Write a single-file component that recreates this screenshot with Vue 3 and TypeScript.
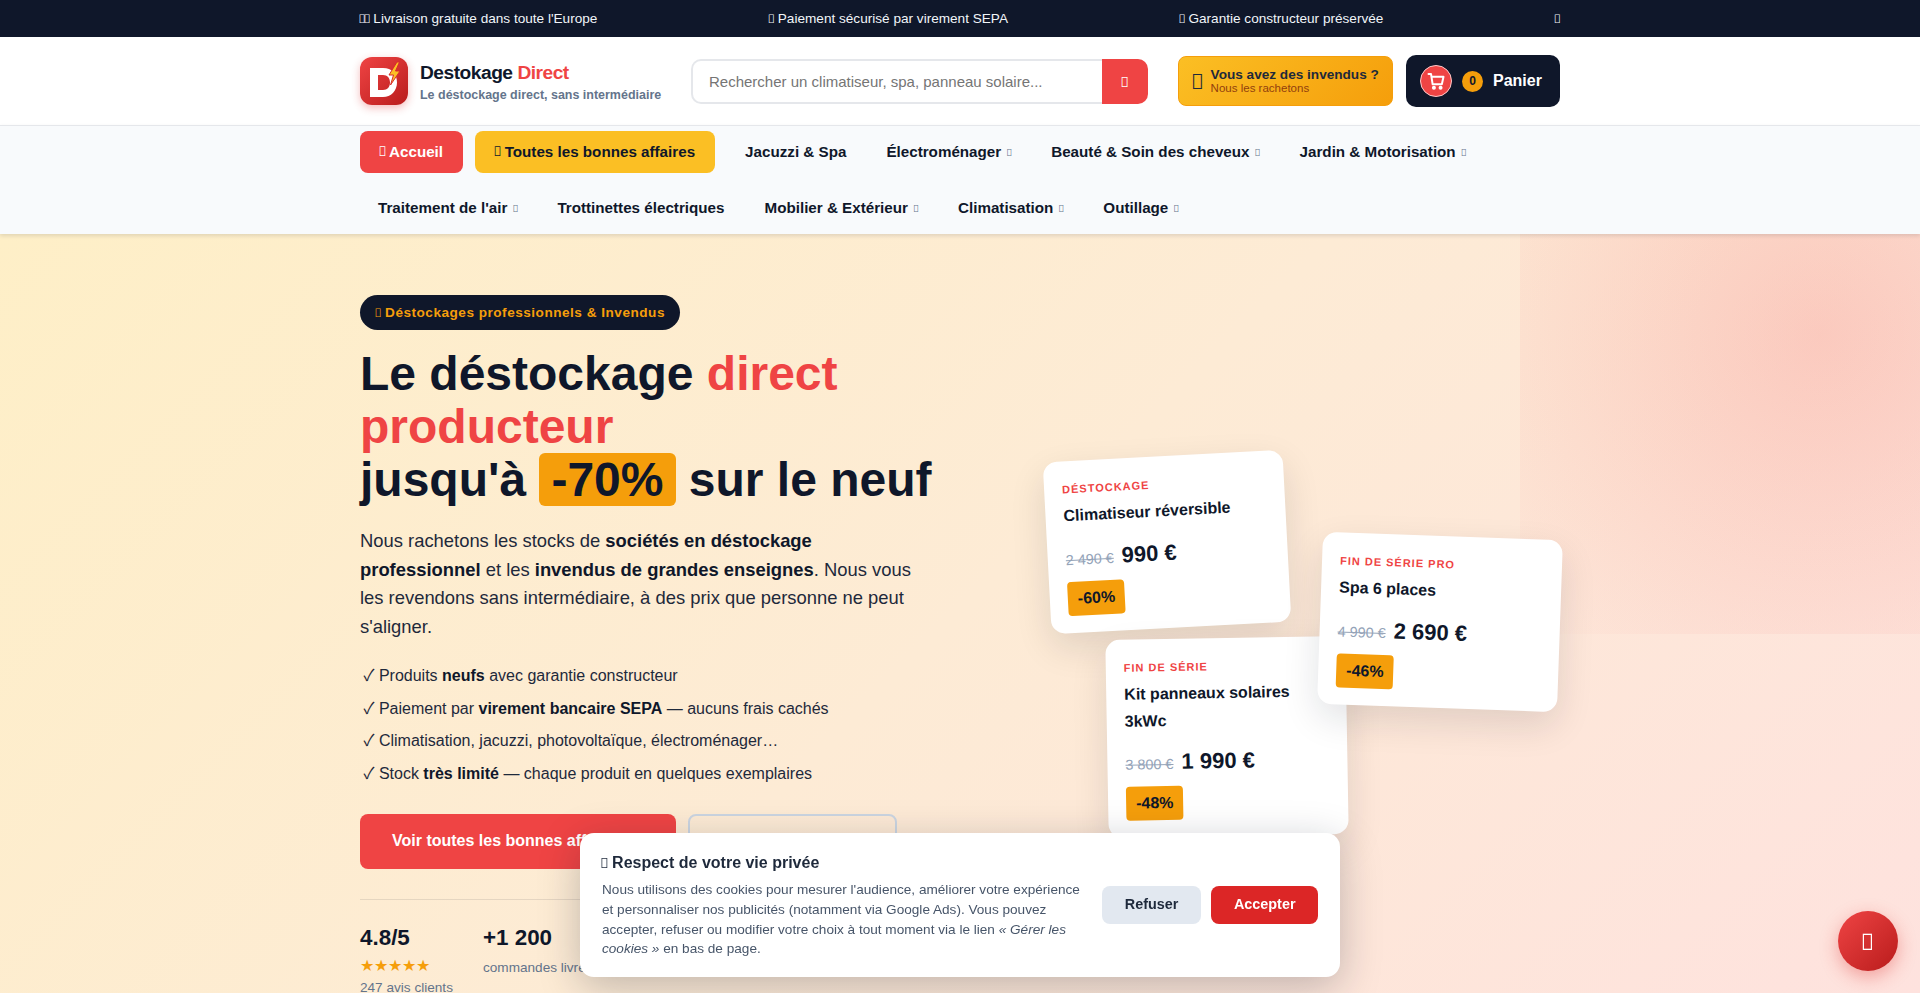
<script setup lang="ts">
interface NavItem {
  label: string
  caret?: boolean
}

interface DealCard {
  tag: string
  name: string
  oldPrice: string
  price: string
  off: string
  cls: string
}

const navItems: NavItem[] = [
  { label: 'Jacuzzi & Spa' },
  { label: 'Électroménager', caret: true },
  { label: 'Beauté & Soin des cheveux', caret: true },
  { label: 'Jardin & Motorisation', caret: true },
  { label: "Traitement de l'air", caret: true },
  { label: 'Trottinettes électriques' },
  { label: 'Mobilier & Extérieur', caret: true },
  { label: 'Climatisation', caret: true },
  { label: 'Outillage', caret: true },
]

const cards: DealCard[] = [
  { tag: 'Déstockage', name: 'Climatiseur réversible', oldPrice: '2 490 €', price: '990 €', off: '-60%', cls: 'deal-a' },
  { tag: 'Fin de série', name: 'Kit panneaux solaires 3kWc', oldPrice: '3 800 €', price: '1 990 €', off: '-48%', cls: 'deal-b' },
  { tag: 'Fin de série pro', name: 'Spa 6 places', oldPrice: '4 990 €', price: '2 690 €', off: '-46%', cls: 'deal-c' },
]

const checks = [
  ['Produits ', 'neufs', ' avec garantie constructeur'],
  ['Paiement par ', 'virement bancaire SEPA', ' — aucuns frais cachés'],
  ['Climatisation, jacuzzi, photovoltaïque, électroménager…', '', ''],
  ['Stock ', 'très limité', ' — chaque produit en quelques exemplaires'],
]
</script>

<template>
  <div class="page">
    <div class="topbar">
      <div class="wrap topbar-row">
        <span><i class="tofu">&#xf024;</i><i class="tofu">&#xf024;</i> Livraison gratuite dans toute l'Europe</span>
        <span><i class="tofu">&#xf023;</i> Paiement sécurisé par virement SEPA</span>
        <span><i class="tofu">&#xf3ed;</i> Garantie constructeur préservée</span>
        <span><i class="tofu">&#xf00d;</i></span>
      </div>
    </div>

    <header class="head">
      <div class="wrap head-row">
        <a class="logo">
          <span class="logo-mark">
            <svg viewBox="0 0 48 48" width="48" height="48">
              <path d="M10 11H23C32 11 37 17 37 25.500C37 34 31 40 23 40H10ZM18 18V33H23C27.500 33 30 30 30 25.500C30 21 27.500 18 23 18Z" fill="#fff" fill-rule="evenodd" />
              <path d="M37 5L29 18H33.500L30.500 28L40 14H35.500L39.500 5Z" fill="#fbbf24" stroke="#d92b2b" stroke-width="1" />
            </svg>
          </span>
          <span class="logo-text">
            <span class="logo-name">Destokage <em>Direct</em></span>
            <span class="logo-sub">Le déstockage direct, sans intermédiaire</span>
          </span>
        </a>

        <form class="search" @submit.prevent>
          <input type="text" placeholder="Rechercher un climatiseur, spa, panneau solaire..." />
          <button type="button"><i class="tofu">&#xf002;</i></button>
        </form>

        <a class="sell">
          <i class="tofu sell-icon">&#xf4c0;</i>
          <span class="sell-text">
            <strong>Vous avez des invendus ?</strong>
            <small>Nous les rachetons</small>
          </span>
        </a>

        <a class="cart">
          <span class="cart-icon">
            <svg viewBox="0 0 24 24" width="20" height="20" fill="none" stroke="#fff" stroke-width="2.400" stroke-linecap="round" stroke-linejoin="round">
              <circle cx="9.500" cy="20" r="1.200" fill="#fff" />
              <circle cx="17.500" cy="20" r="1.200" fill="#fff" />
              <path d="M3 3.500h3l2 12.500h11l2-9H6.600" />
            </svg>
          </span>
          <span class="cart-count">0</span>
          <span class="cart-label">Panier</span>
        </a>
      </div>
    </header>

    <nav class="nav">
      <div class="wrap nav-row">
        <a class="nav-link is-home"><i class="tofu">&#xf015;</i> Accueil</a>
        <a class="nav-link is-deals"><i class="tofu">&#xf02b;</i> Toutes les bonnes affaires</a>
        <a v-for="item in navItems" :key="item.label" class="nav-link">
          {{ item.label }}<i v-if="item.caret" class="tofu caret">&#xf078;</i>
        </a>
      </div>
    </nav>

    <section class="hero">
      <div class="wrap hero-grid">
        <div class="hero-left">
          <span class="pill"><i class="tofu">&#xf0e7;</i> Déstockages professionnels &amp; Invendus</span>
          <h1>
            Le déstockage <span class="red">direct producteur</span><br />
            jusqu'à <span class="hl">-70%</span> sur le neuf
          </h1>
          <p class="lead">
            Nous rachetons les stocks de <strong>sociétés en déstockage professionnel</strong> et les
            <strong>invendus de grandes enseignes</strong>. Nous vous les revendons sans intermédiaire,
            à des prix que personne ne peut s'aligner.
          </p>
          <ul class="checks">
            <li v-for="line in checks" :key="line[0]">
              <span class="tick">✓</span> {{ line[0] }}<strong>{{ line[1] }}</strong>{{ line[2] }}
            </li>
          </ul>
          <div class="actions">
            <a class="btn btn-main">Voir toutes les bonnes affaires →</a>
            <a class="btn btn-ghost">Notre engagement</a>
          </div>
          <div class="stats">
            <div class="stat">
              <b>4.8/5</b>
              <span class="stars">★★★★★</span>
              <span>247 avis clients</span>
            </div>
            <div class="stat">
              <b>+1 200</b>
              <span class="stat-note">commandes livrées</span>
            </div>
          </div>
        </div>

        <div class="hero-right">
          <article v-for="card in cards" :key="card.name" class="deal" :class="card.cls">
            <div class="deal-tag">{{ card.tag }}</div>
            <div class="deal-name">{{ card.name }}</div>
            <div class="deal-prices">
              <s>{{ card.oldPrice }}</s>
              <b>{{ card.price }}</b>
            </div>
            <span class="deal-off">{{ card.off }}</span>
          </article>
        </div>
      </div>
    </section>

    <aside class="cookie">
      <div class="cookie-text">
        <h4><i class="tofu">&#xf564;</i> Respect de votre vie privée</h4>
        <p>
          Nous utilisons des cookies pour mesurer l'audience, améliorer votre expérience
          et personnaliser nos publicités (notamment via Google Ads). Vous pouvez accepter, refuser ou
          modifier votre choix à tout moment via le lien <em>« Gérer les cookies »</em> en bas de page.
        </p>
      </div>
      <div class="cookie-btns">
        <button type="button" class="refuse">Refuser</button>
        <button type="button" class="accept">Accepter</button>
      </div>
    </aside>

    <a class="fab"><i class="tofu">&#xf0e0;</i></a>
  </div>
</template>

<style>
html,
body {
  margin: 0;
  height: 993px;
  overflow: hidden;
}
</style>

<style scoped>
.page {
  font-family: 'Liberation Sans', Arial, sans-serif;
  color: #0f172a;
  height: 993px;
  overflow: hidden;
}

.wrap {
  width: 1200px;
  margin: 0 auto;
}

/* missing-glyph boxes, same as the icon font that never loaded */
.tofu {
  font-family: 'Noto Sans', sans-serif;
  font-style: normal;
  font-weight: 400;
  font-size: 0.88em;
  margin-left: -0.12em;
  letter-spacing: -0.08em;
}

.topbar {
  background: #0f172a;
  color: #f1f5f9;
  font-size: 13.600px;
  height: 37px;
}

.topbar-row {
  height: 37px;
  display: flex;
  align-items: center;
  justify-content: space-between;
}

.head {
  background: #fff;
  height: 88px;
}

.head-row {
  height: 88px;
  display: flex;
  align-items: center;
}

.logo {
  display: flex;
  align-items: center;
  gap: 12px;
  width: 331px;
}

.logo-mark {
  width: 48px;
  height: 48px;
  border-radius: 12px;
  background: linear-gradient(135deg, #ef4444, #b91c1c);
  box-shadow: 0 3px 8px rgba(220, 38, 38, 0.3);
  display: block;
}

.logo-mark svg {
  display: block;
}

.logo-text {
  display: flex;
  flex-direction: column;
  gap: 3px;
}

.logo-name {
  font-size: 19.200px;
  font-weight: 700;
  letter-spacing: -0.5px;
  line-height: 24px;
}

.logo-name em {
  font-style: normal;
  color: #ef4444;
}

.logo-sub {
  font-size: 12.480px;
  font-weight: 700;
  color: #64748b;
}

.search {
  width: 457px;
  height: 45px;
  display: flex;
}

.search input {
  flex: 1;
  min-width: 0;
  box-sizing: border-box;
  border: 2px solid #e5e7eb;
  border-right: 0;
  border-radius: 10px 0 0 10px;
  padding: 0 16px;
  font: 15px 'Liberation Sans', Arial, sans-serif;
  outline: none;
}

.search input::placeholder {
  color: #757575;
}

.search button {
  width: 46px;
  border: 0;
  border-radius: 0 10px 10px 0;
  background: #ef4444;
  color: #fff;
  font-size: 16px;
  padding: 0;
}

.sell {
  margin-left: 30px;
  width: 215px;
  height: 50px;
  box-sizing: border-box;
  border: 1px solid #f59e0b;
  border-radius: 8px;
  background: linear-gradient(135deg, #fbbf24, #f59e0b);
  display: flex;
  align-items: center;
  gap: 8px;
  padding: 0 14px;
  color: #1e293b;
}

.sell-icon {
  font-size: 21px;
  margin-left: -2px;
  letter-spacing: -1px;
}

.sell-text {
  display: flex;
  flex-direction: column;
  margin-top: -1px;
}

.sell-text strong {
  font-size: 13.600px;
  white-space: nowrap;
}

.sell-text small {
  font-size: 11.520px;
  color: #92400e;
}

.cart {
  margin-left: 13px;
  width: 154px;
  height: 52px;
  box-sizing: border-box;
  border-radius: 10px;
  background: #0f172a;
  color: #fff;
  display: flex;
  align-items: center;
  padding: 0 14px;
}

.cart-icon {
  width: 32px;
  height: 32px;
  box-sizing: border-box;
  border: 1.500px solid #fecaca;
  border-radius: 50%;
  background: #ef4444;
  display: flex;
  align-items: center;
  justify-content: center;
}

.cart-count {
  width: 21px;
  height: 21px;
  border-radius: 50%;
  margin-left: 10px;
  background: #f59e0b;
  color: #0f172a;
  font-size: 12px;
  font-weight: 700;
  display: flex;
  align-items: center;
  justify-content: center;
}

.cart-label {
  margin-left: 10px;
  font-size: 16px;
  font-weight: 700;
}

.nav {
  position: relative;
  z-index: 2;
  box-sizing: border-box;
  height: 109px;
  background: #f8fafc;
  border-top: 1px solid #e5e7eb;
  box-shadow: 0 2px 4px rgba(15, 23, 42, 0.12);
  padding-top: 5px;
}

.nav-row {
  display: flex;
  flex-wrap: wrap;
  gap: 14px 4px;
}

.nav-link {
  height: 42px;
  box-sizing: border-box;
  display: flex;
  align-items: center;
  padding: 0 18px 2px;
  font-size: 15.200px;
  font-weight: 700;
  color: #0f172a;
  white-space: pre;
  border-radius: 8px;
}

.is-home,
.is-deals {
  padding: 0 20px 2px;
  margin-right: 8px;
}

.is-home {
  background: #ef4444;
  color: #fff;
}

.is-deals {
  background: #fbbf24;
}

.caret {
  font-size: 10px;
  color: #64748b;
  margin-left: 5px;
  margin-top: 2px;
  letter-spacing: -1px;
}

.hero {
  position: relative;
  height: 759px;
  background: linear-gradient(135deg, #feefc7 0%, #fdebd5 50%, #fee2de 100%);
  overflow: hidden;
}

.hero::before {
  content: '';
  position: absolute;
  top: -200px;
  right: -200px;
  width: 600px;
  height: 600px;
  background: radial-gradient(circle, rgba(239, 68, 68, 0.18) 0%, rgba(239, 68, 68, 0) 100%);
}

.hero-grid {
  position: relative;
  display: grid;
  grid-template-columns: 590px 570px;
  gap: 40px;
  padding-top: 61px;
}

.pill {
  display: inline-block;
  height: 35px;
  line-height: 35px;
  padding: 0 15px 0 16px;
  border-radius: 18px;
  background: #0f172a;
  color: #f59e0b;
  font-size: 13.600px;
  font-weight: 700;
  letter-spacing: 0.5px;
}

h1 {
  margin: 17px 0 0;
  font-size: 48px;
  line-height: 53px;
  font-weight: 800;
  color: #0f172a;
}

.red {
  color: #ef4444;
}

.hl {
  display: inline-block;
  background: #f59e0b;
  padding: 0 12px;
  border-radius: 6px;
}

.lead {
  margin: 21px 0 0;
  width: 560px;
  font-size: 18.400px;
  line-height: 28.500px;
  color: #1e293b;
}

.lead strong {
  color: #0f172a;
}

.checks {
  list-style: none;
  margin: 17px 0 0;
  padding: 0 0 0 3.500px;
  font-size: 16px;
  color: #1e293b;
}

.checks li {
  height: 32.500px;
  line-height: 32.500px;
}

.tick {
  font-family: 'Noto Sans CJK SC', sans-serif;
}

.checks strong {
  color: #0f172a;
}

.actions {
  margin-top: 26px;
  display: flex;
  gap: 12px;
}

.btn {
  height: 55px;
  box-sizing: border-box;
  display: flex;
  align-items: center;
  padding: 0 32px 2px;
  border-radius: 8px;
  font-size: 16px;
  font-weight: 700;
  white-space: nowrap;
}

.btn-main {
  background: #ef4444;
  color: #fff;
}

.btn-ghost {
  border: 2px solid #cbd5e1;
  width: 209px;
  color: #0f172a;
}

.stats {
  margin-top: 30px;
  padding-top: 24px;
  border-top: 1px solid rgba(15, 23, 42, 0.1);
  display: flex;
  gap: 30px;
}

.stat {
  display: flex;
  flex-direction: column;
  font-size: 13.600px;
  color: #64748b;
}

.stat b {
  font-size: 22.400px;
  line-height: 28px;
  color: #0f172a;
}

.stars {
  margin-top: 5px;
  font-size: 16px;
  line-height: 18px;
  color: #f59e0b;
}

.stars + span {
  margin-top: 5px;
}

.stat-note {
  margin-top: 8px;
}

.hero-right {
  position: relative;
}

.deal {
  position: absolute;
  box-sizing: border-box;
  width: 240px;
  padding: 22px 18px 17px;
  background: #fff;
  border-radius: 14px;
  box-shadow: 0 14px 36px rgba(15, 23, 42, 0.12);
}

.deal-a {
  left: 57px;
  top: 161px;
  transform: rotate(-3deg);
}

.deal-b {
  left: 117px;
  top: 342.500px;
  transform: rotate(-1deg);
}

.deal-c {
  left: 330px;
  top: 241px;
  transform: rotate(2deg);
}

.deal-tag {
  font-size: 11px;
  font-weight: 700;
  letter-spacing: 1px;
  text-transform: uppercase;
  color: #ef4444;
}

.deal-name {
  margin-top: 8px;
  font-size: 16px;
  line-height: 26.500px;
  font-weight: 700;
  color: #0f172a;
}

.deal-prices {
  margin-top: 15px;
  display: flex;
  align-items: baseline;
  gap: 8px;
}

.deal-prices s {
  font-size: 14.400px;
  color: #94a3b8;
}

.deal-prices b {
  font-size: 22px;
  color: #0f172a;
}

.deal-off {
  display: inline-block;
  margin-top: 11px;
  padding: 9px 10px;
  border-radius: 4px;
  background: #f59e0b;
  font-size: 16px;
  line-height: 16px;
  font-weight: 700;
  color: #0f172a;
}

.cookie {
  position: fixed;
  left: 580px;
  bottom: 16px;
  z-index: 5;
  box-sizing: border-box;
  width: 760px;
  height: 144px;
  padding: 20px 22px;
  background: #fff;
  border-radius: 14px;
  box-shadow: 0 10px 40px rgba(15, 23, 42, 0.25);
  display: flex;
  align-items: center;
  gap: 20px;
}

.cookie-text {
  flex: 1;
  min-width: 0;
  padding-top: 2px;
}

.cookie-text h4 {
  margin: 0 0 7px;
  font-size: 16px;
  line-height: 20px;
  color: #1e293b;
}

.cookie-text p {
  margin: 0;
  font-size: 13.600px;
  line-height: 19.800px;
  color: #475569;
}

.cookie-btns {
  display: flex;
  gap: 10.500px;
  flex: none;
}

.cookie-btns button {
  height: 38px;
  padding: 0 22.500px 2px;
  border: 0;
  border-radius: 8px;
  font: 700 14.400px 'Liberation Sans', Arial, sans-serif;
}

.refuse {
  background: #e2e8f0;
  color: #1e293b;
}

.accept {
  background: #dc2626;
  color: #fff;
}

.fab {
  position: fixed;
  right: 22px;
  bottom: 22px;
  z-index: 6;
  width: 60px;
  height: 60px;
  border-radius: 50%;
  background: linear-gradient(135deg, #ef4444, #b91c1c);
  box-shadow: 0 6px 18px rgba(220, 38, 38, 0.35);
  color: #fff;
  font-size: 26px;
  display: flex;
  align-items: center;
  justify-content: center;
}
</style>
